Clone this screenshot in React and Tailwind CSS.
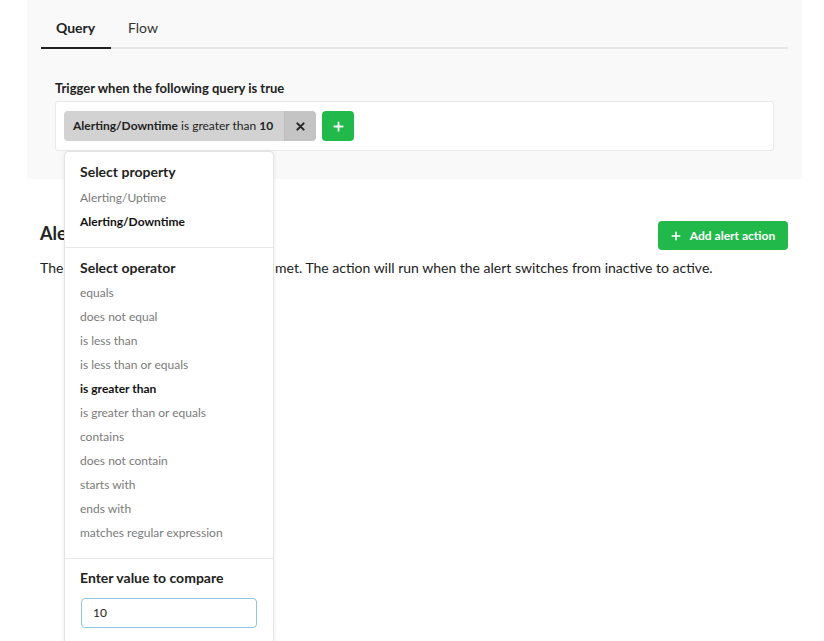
import React from "react";

const ops = [
  "equals",
  "does not equal",
  "is less than",
  "is less than or equals",
  "is greater than",
  "is greater than or equals",
  "contains",
  "does not contain",
  "starts with",
  "ends with",
  "matches regular expression",
];

function Plus({ className }) {
  return (
    <svg viewBox="0 0 12 12" className={className} fill="none" stroke="currentColor" strokeWidth="2" strokeLinecap="round">
      <path d="M6 1.5v9M1.5 6h9" />
    </svg>
  );
}

export default function App() {
  return (
    <div className="min-h-[641px] w-[824px] bg-white text-[#222] overflow-hidden" style={{ fontFamily: "Lato, 'Open Sans', sans-serif" }}>
      <div className="ml-[27px] w-[775px]">
        <div className="bg-[#f9f9f9] pb-[28px]">
          <div className="mx-[14px] w-[747px] flex border-b-2 border-[#e4e4e4] pt-[18px]">
            <div className="-mb-[2px] border-b-2 border-[#222] w-[70px] pl-[15px] pb-[9px] text-[14px] leading-[20px] font-bold">Query</div>
            <div className="pl-[17px] pb-[9px] text-[14px] leading-[20px] text-[#333]">Flow</div>
          </div>
          <div className="px-[28px] pt-[31px]">
            <div className="text-[13px] leading-[16px] font-bold mb-[5px]">Trigger when the following query is true</div>
            <div className="relative w-[719px] h-[50px] bg-white border border-[#e9e9e9] rounded-[3px] pl-[8px] pt-[9px] flex gap-[6px]">
              <div className="flex h-[30px] rounded-[4px] overflow-hidden">
                <div className="bg-[#d2d2d2] pl-[9px] pr-[11px] flex items-center text-[12px] whitespace-pre">
                  <span className="font-bold">Alerting/Downtime</span>
                  <span> is greater than </span>
                  <span className="font-bold">10</span>
                </div>
                <div className="bg-[#c4c4c4] w-[32px] flex items-center justify-center border-l border-[#bdbdbd]">
                  <svg viewBox="0 0 10 10" className="w-[9px] h-[9px]" stroke="#222" strokeWidth="2.2" strokeLinecap="round">
                    <path d="M1.5 1.5l7 7M8.5 1.5l-7 7" />
                  </svg>
                </div>
              </div>
              <div className="w-[32px] h-[30px] rounded-[4px] bg-[#22b94b] flex items-center justify-center text-white">
                <Plus className="w-[11px] h-[11px]" />
              </div>

              <div className="absolute left-[8px] top-[49px] z-10 w-[210px] bg-white border border-[#e3e3e3] rounded-[4px] shadow-[0_1px_4px_rgba(0,0,0,0.08)] h-[560px]">
                <div className="px-[15px] pt-[11px] pb-[13px] border-b border-[#e8e8e8]">
                  <div className="text-[14px] leading-[18px] font-bold mb-[5px]">Select property</div>
                  <div className="text-[12px] leading-[24px] text-[#7a7a7a]">Alerting/Uptime</div>
                  <div className="text-[12px] leading-[24px] font-bold text-[#111]">Alerting/Downtime</div>
                </div>
                <div className="px-[15px] pt-[11px] pb-[13px] border-b border-[#e8e8e8]">
                  <div className="text-[14px] leading-[18px] font-bold mb-[4px]">Select operator</div>
                  {ops.map((o) => (
                    <div key={o} className={o === "is greater than" ? "text-[12px] leading-[24px] font-bold text-[#111]" : "text-[12px] leading-[24px] text-[#7a7a7a]"}>
                      {o}
                    </div>
                  ))}
                </div>
                <div className="px-[16px] pt-[10px]">
                  <div className="text-[14px] leading-[18px] font-bold mb-[11px] -ml-px">Enter value to compare</div>
                  <div className="h-[30px] w-[176px] border border-[#8ec5e6] rounded-[4px] flex items-center pl-[11px] text-[12px] text-[#222]">10</div>
                </div>
              </div>
            </div>
          </div>
        </div>

        <div className="px-[13px]">
          <div className="mt-[42px] flex justify-between items-start">
            <div className="text-[18px] leading-[24px] font-bold">Alert actions</div>
            <div className="h-[29px] w-[130px] mr-px rounded-[4px] bg-[#22b94b] text-white flex items-center justify-center gap-[9px] text-[12px] font-bold">
              <Plus className="w-[10px] h-[10px]" />
              <span>Add alert action</span>
            </div>
          </div>
          <div className="mt-[8px] text-[14px] leading-[20px] whitespace-nowrap">
            The following will run when a query is met. The action will run when the alert switches from inactive to active.
          </div>
        </div>
      </div>
    </div>
  );
}
